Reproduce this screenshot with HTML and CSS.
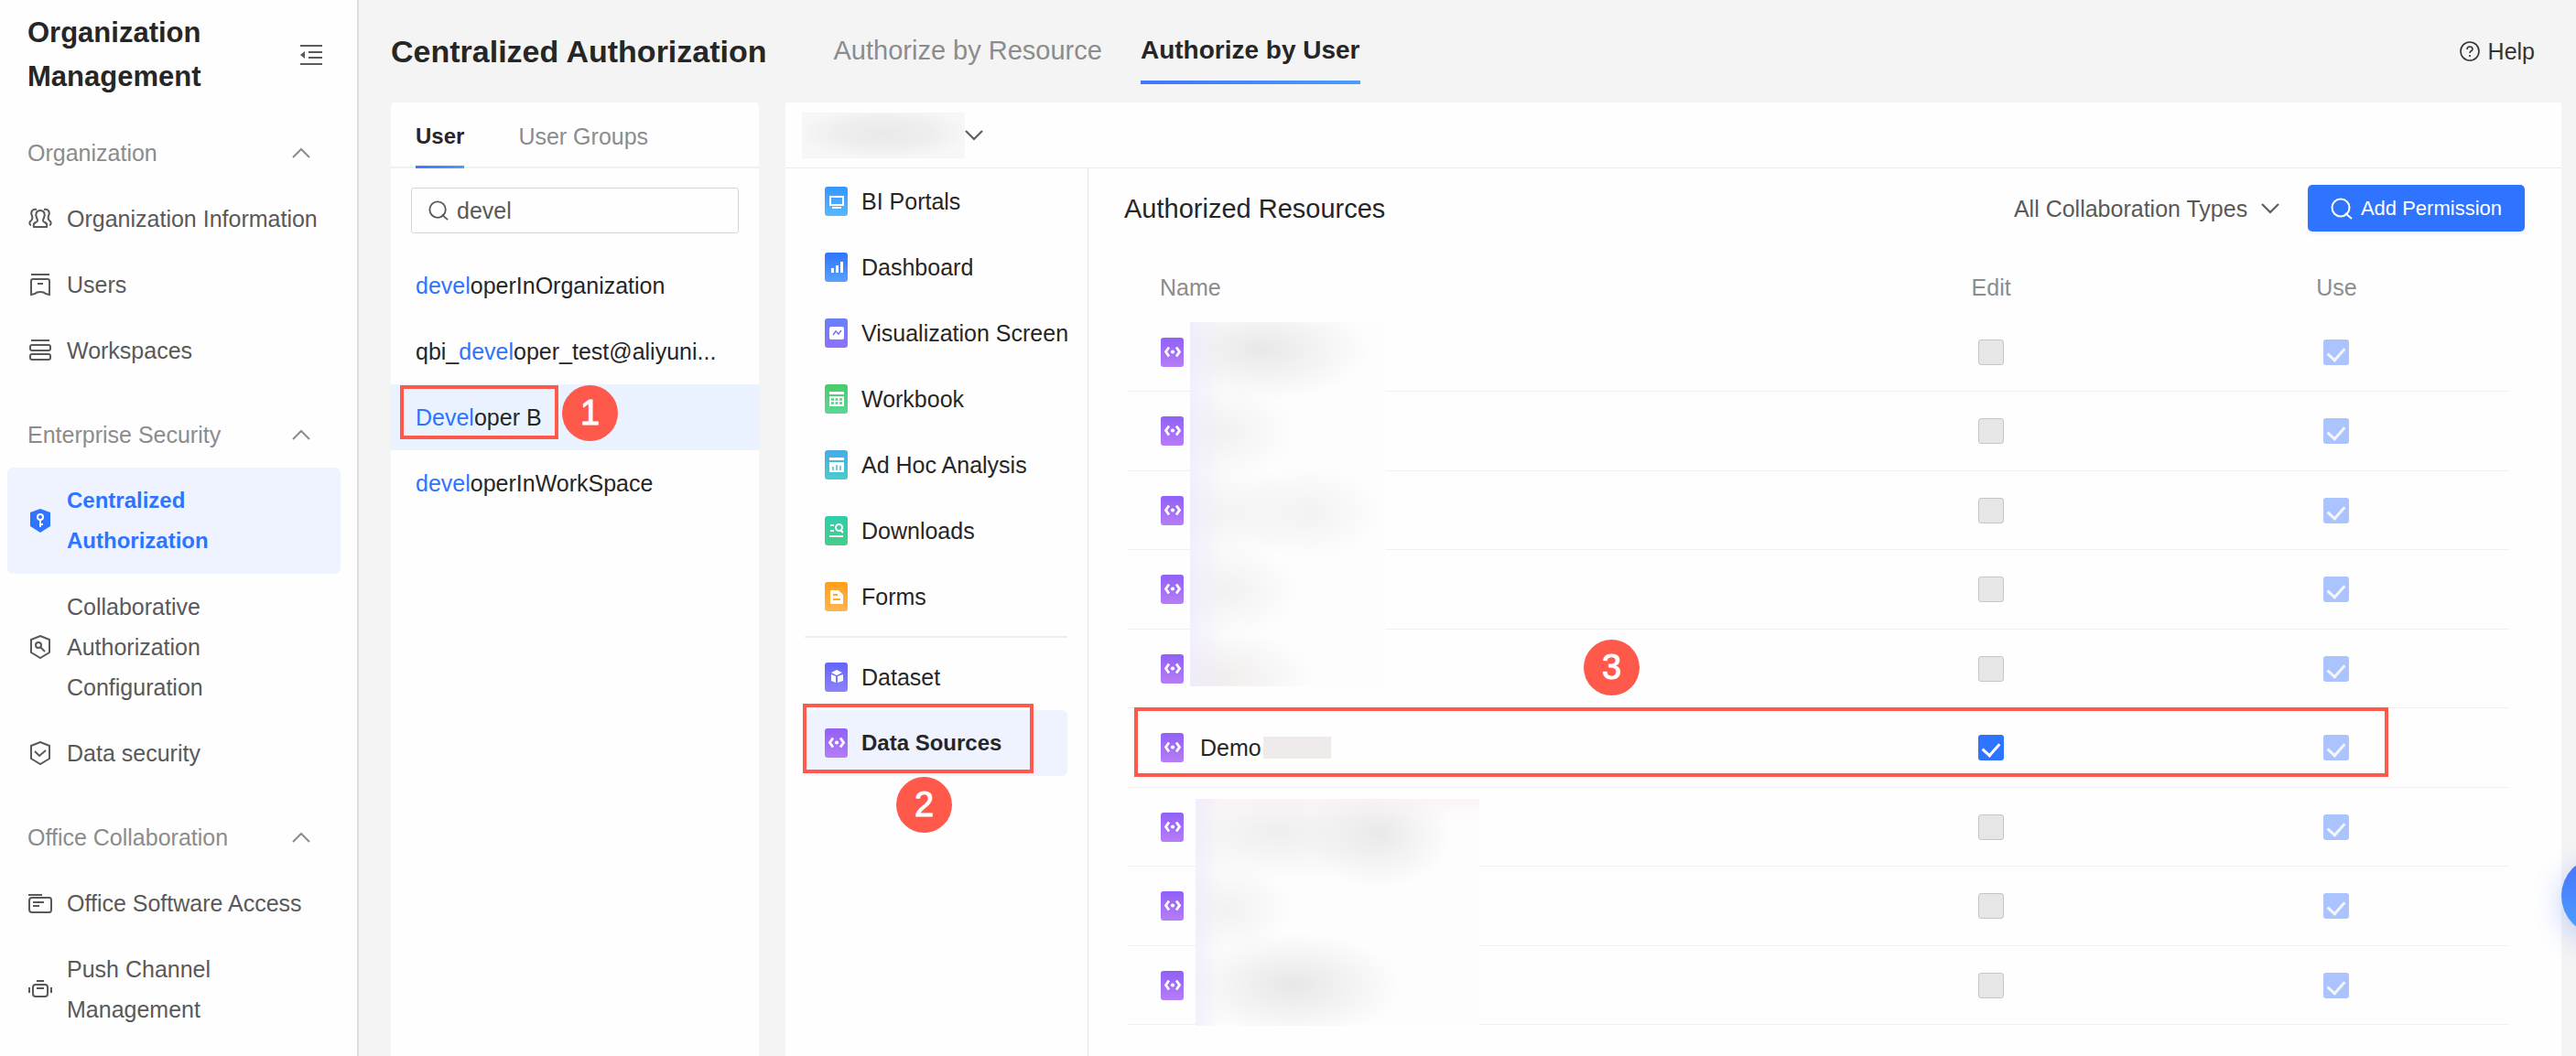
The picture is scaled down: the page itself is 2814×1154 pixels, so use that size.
FILE: index.html
```html
<!DOCTYPE html>
<html lang="en">

<head>
    <meta charset="UTF-8">
    <meta name="viewport" content="width=device-width, initial-scale=1.0">
    <title>Centralized Authorization</title>
    <link rel="stylesheet" href="styles.css">
</head>

<body>

    <!-- shared icons -->
    <svg class="sprite" aria-hidden="true">
        <symbol id="up" viewBox="0 0 20 12">
            <path d="M1 11l9-9 9 9" fill="none" stroke="currentColor" stroke-width="2" />
        </symbol>
        <symbol id="down" viewBox="0 0 20 12">
            <path d="M1 1l9 9 9-9" fill="none" stroke="currentColor" stroke-width="2" />
        </symbol>
        <symbol id="search" viewBox="0 0 24 24">
            <circle cx="11" cy="11" r="9.500" fill="none" stroke="currentColor" stroke-width="2" />
            <path d="M16 17l7 6" fill="none" stroke="currentColor" stroke-width="2" />
        </symbol>
        <symbol id="source" viewBox="0 0 25 32">
            <path d="M9 10.500l-3.500 5 3.500 5M17 10.500l3.500 5-3.500 5" fill="none" stroke="#fff" stroke-width="2.800" />
            <circle cx="13" cy="15.500" r="2.100" fill="#fff" />
        </symbol>
    </svg>

    <div class="layout">
        <aside class="sidebar">
            <div class="side-title">
                <h2>Organization Management</h2>
                <button class="plain" aria-label="Collapse menu">
                    <svg width="24" height="24" viewBox="0 0 24 24" fill="none" stroke="#595959" stroke-width="2">
                        <path d="M0 2h24M9 9h15M9 15h15M0 22h24" />
                        <path d="M0 12l5-4v8z" fill="#595959" stroke="none" />
                    </svg>
                </button>
            </div>

            <nav>
                <button class="group">Organization <svg class="chev"><use href="#up" /></svg></button>
                <a class="item" href="#">
                    <svg class="ico" viewBox="0 0 26 26">
                        <path d="M6 22C5 19 6 18 8 17C11 16 10 14 9 12C7 8 9 4 13 4C17 4 19 8 17 12C16 14 15 16 18 17C20 18 21 19 20 22Z" />
                        <path d="M9 3C4 2 2 6 4 10C5 13 4 14 2 16C1 17 1 20 3 20M17 3C22 2 24 6 22 10C21 13 22 14 24 16C25 17 25 20 23 20" />
                    </svg>
                    <span>Organization Information</span>
                </a>
                <a class="item" href="#">
                    <svg class="ico" viewBox="0 0 26 26">
                        <path d="M3 2h20M5 7h16q2 0 2 2v15l-4-1q-2-2-6-2t-6 2l-4 1V9q0-2 2-2zM10 12h6" />
                    </svg>
                    <span>Users</span>
                </a>
                <a class="item" href="#">
                    <svg class="ico" viewBox="0 0 26 26">
                        <path d="M3 2h20" />
                        <rect x="2" y="7" width="22" height="6" rx="2" />
                        <rect x="2" y="17" width="22" height="6" rx="2" />
                    </svg>
                    <span>Workspaces</span>
                </a>

                <button class="group">Enterprise Security <svg class="chev"><use href="#up" /></svg></button>
                <a class="item active" href="#">
                    <svg class="ico" viewBox="0 0 26 26">
                        <path d="M13 0l11 4v15l-11 7-11-7V4z" fill="#2e74ff" stroke="none" />
                        <circle cx="13" cy="9" r="3" stroke="#fff" />
                        <path d="M13 12v8M13 17h3" stroke="#fff" />
                    </svg>
                    <span>Centralized Authorization</span>
                </a>
                <a class="item" href="#">
                    <svg class="ico" viewBox="0 0 26 26">
                        <path d="M13 1l10 4v14l-10 6-10-6V5z" />
                        <circle cx="11" cy="11" r="3" />
                        <path d="M13 13l5 5" />
                    </svg>
                    <span>Collaborative Authorization Configuration</span>
                </a>
                <a class="item" href="#">
                    <svg class="ico" viewBox="0 0 26 26">
                        <path d="M13 1l10 4v14l-10 6-10-6V5zM7 11l5 5 7-6" />
                    </svg>
                    <span>Data security</span>
                </a>

                <button class="group">Office Collaboration <svg class="chev"><use href="#up" /></svg></button>
                <a class="item" href="#">
                    <svg class="ico" viewBox="0 0 26 26">
                        <path d="M0 4h15M5 12h12M5 16h7" />
                        <path d="M1 10q0-3 3-3h19q2 0 2 3v10q0 3-2 3H4q-3 0-3-3z" />
                    </svg>
                    <span>Office Software Access</span>
                </a>
                <a class="item" href="#">
                    <svg class="ico" viewBox="0 0 26 26">
                        <path d="M9 4h8M1 11v6M25 11v6M9 12h8" />
                        <rect x="5" y="8" width="16" height="13" rx="3" />
                    </svg>
                    <span>Push Channel Management</span>
                </a>
            </nav>
        </aside>

        <main class="main">
            <header class="topbar">
                <h1>Centralized Authorization</h1>
                <a class="toptab" href="#">Authorize by Resource</a>
                <a class="toptab on" href="#">Authorize by User</a>
                <a class="help" href="#">
                    <svg width="22" height="22" viewBox="0 0 22 22" fill="none" stroke="#333" stroke-width="1.600">
                        <circle cx="11" cy="11" r="10" />
                        <path d="M8 9q0-3 3-3t3 3q0 1-2 2-1 1-1 2M11 15v2" />
                    </svg>
                    Help
                </a>
            </header>

            <div class="panels">
                <section class="panel users">
                    <div class="usertabs">
                        <a class="usertab on" href="#">User</a>
                        <a class="usertab" href="#">User Groups</a>
                    </div>
                    <label class="searchbox">
                        <svg width="22" height="22"><use href="#search" /></svg>
                        <input type="text" aria-label="Search users" value="devel">
                    </label>
                    <ul class="userlist">
                        <li><b>devel</b>operInOrganization</li>
                        <li>qbi_<b>devel</b>oper_test@aliyuni...</li>
                        <li class="picked"><b>Devel</b>oper B
                            <span class="frame frame1"></span>
                            <span class="step step1">1</span>
                        </li>
                        <li><b>devel</b>operInWorkSpace</li>
                    </ul>
                </section>

                <section class="panel detail">
                    <div class="who">
                        <button class="plain" aria-label="Selected user">
                            <span class="hidden-name"></span>
                            <svg class="chev"><use href="#down" /></svg>
                        </button>
                    </div>

                    <div class="split">
                        <nav class="types">
                            <a class="type" href="#">
                                <svg class="tile portal" viewBox="0 0 25 32" fill="none" stroke="#fff" stroke-width="2">
                                    <rect x="6" y="11" width="14" height="9" />
                                    <path d="M8 23h10" />
                                </svg>
                                BI Portals
                            </a>
                            <a class="type" href="#">
                                <svg class="tile dash" viewBox="0 0 25 32" fill="none" stroke="#fff" stroke-width="3">
                                    <path d="M8.500 17v5M13.500 14v8M18.500 10v12" />
                                </svg>
                                Dashboard
                            </a>
                            <a class="type" href="#">
                                <svg class="tile screen" viewBox="0 0 25 32">
                                    <rect x="5" y="9" width="16" height="14" rx="2" fill="#fff" />
                                    <path d="M9 18l3-4 3 3 3-4" fill="none" stroke="#7a78fb" stroke-width="1.500" />
                                </svg>
                                Visualization Screen
                            </a>
                            <a class="type" href="#">
                                <svg class="tile book" viewBox="0 0 25 32">
                                    <path d="M5 8h16v3H5zM5 13h16v11H5z" fill="#fff" />
                                    <path d="M7 16.500h12M7 20.500h12" stroke="#52d286" stroke-width="2.500" stroke-dasharray="3 1.500" />
                                </svg>
                                Workbook
                            </a>
                            <a class="type" href="#">
                                <svg class="tile adhoc" viewBox="0 0 25 32">
                                    <path d="M5 8h16v3H5zM5 13h16v10q0 1-1 1H6q-1 0-1-1z" fill="#fff" />
                                    <path d="M9 18v4M13 16v6M17 17v5" stroke="#47bdd8" stroke-width="1.500" />
                                </svg>
                                Ad Hoc Analysis
                            </a>
                            <a class="type" href="#">
                                <svg class="tile down" viewBox="0 0 25 32" fill="none" stroke="#fff" stroke-width="2">
                                    <path d="M6 10h4M6 16h4M5 22h15" />
                                    <circle cx="15.500" cy="12.500" r="3.500" />
                                    <path d="M17 15l3 3" />
                                </svg>
                                Downloads
                            </a>
                            <a class="type" href="#">
                                <svg class="tile form" viewBox="0 0 25 32">
                                    <path d="M6 10q0-1 1-1h8l5 5v9q0 1-1 1H7q-1 0-1-1z" fill="#fff" />
                                    <path d="M9 14h5M9 19h8" stroke="#ffa62e" stroke-width="2" />
                                </svg>
                                Forms
                            </a>
                            <hr>
                            <a class="type" href="#">
                                <svg class="tile set" viewBox="0 0 25 32" fill="#fff">
                                    <path d="M13 8l6 3-6 3-6-3zM7 13l5 2v7l-5-2zM20 13l-6 2v7l6-2z" />
                                </svg>
                                Dataset
                            </a>
                            <a class="type on" href="#">
                                <svg class="tile source"><use href="#source" /></svg>
                                Data Sources
                                <span class="frame frame2"></span>
                                <span class="step step2">2</span>
                            </a>
                        </nav>

                        <div class="resources">
                            <div class="toolbar">
                                <h3>Authorized Resources</h3>
                                <label class="filter">
                                    <select aria-label="Collaboration type">
                                        <option>All Collaboration Types</option>
                                    </select>
                                    <svg class="chev"><use href="#down" /></svg>
                                </label>
                                <button class="add">
                                    <svg width="24" height="24"><use href="#search" /></svg>
                                    Add Permission
                                </button>
                            </div>

                            <table>
                                <thead>
                                    <tr>
                                        <th>Name</th>
                                        <th>Edit</th>
                                        <th>Use</th>
                                    </tr>
                                </thead>
                                <tbody>
                                    <tr>
                                        <td><svg class="tile source"><use href="#source" /></svg><span class="mask mask1"></span></td>
                                        <td><input type="checkbox" aria-label="Edit" disabled></td>
                                        <td><input type="checkbox" aria-label="Use" checked disabled></td>
                                    </tr>
                                    <tr>
                                        <td><svg class="tile source"><use href="#source" /></svg></td>
                                        <td><input type="checkbox" aria-label="Edit" disabled></td>
                                        <td><input type="checkbox" aria-label="Use" checked disabled></td>
                                    </tr>
                                    <tr>
                                        <td><svg class="tile source"><use href="#source" /></svg></td>
                                        <td><input type="checkbox" aria-label="Edit" disabled></td>
                                        <td><input type="checkbox" aria-label="Use" checked disabled></td>
                                    </tr>
                                    <tr>
                                        <td><svg class="tile source"><use href="#source" /></svg></td>
                                        <td><input type="checkbox" aria-label="Edit" disabled></td>
                                        <td><input type="checkbox" aria-label="Use" checked disabled></td>
                                    </tr>
                                    <tr>
                                        <td><svg class="tile source"><use href="#source" /></svg></td>
                                        <td><input type="checkbox" aria-label="Edit" disabled></td>
                                        <td><input type="checkbox" aria-label="Use" checked disabled></td>
                                    </tr>
                                    <tr>
                                        <td>
                                            <div class="name">
                                                <svg class="tile source"><use href="#source" /></svg>
                                                Demo<span class="smudge"></span>
                                            </div>
                                            <span class="frame frame3"></span>
                                            <span class="step step3">3</span>
                                        </td>
                                        <td><input type="checkbox" aria-label="Edit" checked></td>
                                        <td><input type="checkbox" aria-label="Use" checked disabled></td>
                                    </tr>
                                    <tr>
                                        <td><svg class="tile source"><use href="#source" /></svg><span class="mask mask2"></span></td>
                                        <td><input type="checkbox" aria-label="Edit" disabled></td>
                                        <td><input type="checkbox" aria-label="Use" checked disabled></td>
                                    </tr>
                                    <tr>
                                        <td><svg class="tile source"><use href="#source" /></svg></td>
                                        <td><input type="checkbox" aria-label="Edit" disabled></td>
                                        <td><input type="checkbox" aria-label="Use" checked disabled></td>
                                    </tr>
                                    <tr>
                                        <td><svg class="tile source"><use href="#source" /></svg></td>
                                        <td><input type="checkbox" aria-label="Edit" disabled></td>
                                        <td><input type="checkbox" aria-label="Use" checked disabled></td>
                                    </tr>
                                </tbody>
                            </table>
                        </div>
                    </div>
                </section>
            </div>
        </main>
    </div>

    <button class="bubble" aria-label="Assistant"></button>

</body>

</html>
```
FILE: styles.css
```css
* {
    box-sizing: border-box;
}

body {
    margin: 0;
    font-family: "Liberation Sans", Arial, sans-serif;
    font-size: 25px;
    line-height: 44px;
    color: #262626;
    background-color: #f4f4f4;
    overflow: hidden;
}

h1,
h2,
h3,
ul {
    margin: 0;
    padding: 0;
}

a {
    color: inherit;
    text-decoration: none;
}

button,
input,
select {
    font: inherit;
    color: inherit;
    margin: 0;
}

svg {
    display: block;
    flex-shrink: 0;
}

.sprite {
    position: absolute;
    width: 0;
    height: 0;
}

.plain {
    display: flex;
    align-items: center;
    border: none;
    background: none;
    padding: 0;
}

.chev {
    width: 20px;
    height: 12px;
}

.layout {
    display: flex;
    height: 100vh;
}

/* left menu */

.sidebar {
    width: 392px;
    flex-shrink: 0;
    background-color: #fefefe;
    border-right: 2px solid #dcdcdc;
    padding: 0 18px 0 8px;
}

.side-title {
    display: flex;
    align-items: center;
    justify-content: space-between;
    padding: 12px 20px 23px 22px;
}

.side-title h2 {
    width: 240px;
    font-size: 31px;
    line-height: 48px;
}

.group {
    display: flex;
    align-items: center;
    justify-content: space-between;
    width: 100%;
    height: 72px;
    margin-top: 20px;
    padding: 0 33px 0 22px;
    border: none;
    background: none;
    color: #8c8c8c;
}

.group:first-child {
    margin-top: 0;
}

.item {
    display: flex;
    align-items: center;
    gap: 16px;
    padding: 14px 18px 14px 23px;
    border-radius: 6px;
    color: #595959;
}

.item.active {
    background-color: #eff3ff;
    color: #2e74ff;
    font-size: 24px;
    font-weight: bold;
}

.ico {
    width: 26px;
    height: 26px;
    fill: none;
    stroke: #595959;
    stroke-width: 2;
}

/* page header */

.main {
    flex: 1;
    min-width: 0;
    display: flex;
    flex-direction: column;
    padding: 0 16px 0 35px;
}

.topbar {
    display: flex;
    align-items: center;
    height: 112px;
    flex-shrink: 0;
    padding-right: 29px;
}

.topbar h1 {
    font-size: 34px;
    margin-right: 73px;
}

.toptab {
    height: 72px;
    margin-right: 42px;
    padding-top: 13px;
    font-size: 29px;
    color: #8c8c8c;
}

.toptab.on {
    font-size: 28px;
    font-weight: bold;
    color: #262626;
    border-bottom: 4px solid #3f80ff;
    border-image: linear-gradient(to right, #4275ff, #4a9dff) 1;
}

.help {
    display: flex;
    align-items: center;
    gap: 9px;
    margin-left: auto;
    color: #333;
}

.panels {
    display: flex;
    gap: 29px;
    flex: 1;
}

.panel {
    background-color: #fefefe;
    border-radius: 4px 4px 0 0;
}

/* users */

.users {
    width: 402px;
    flex-shrink: 0;
}

.usertabs {
    display: flex;
    gap: 59px;
    height: 72px;
    padding: 0 27px;
    border-bottom: 2px solid #f0f0f0;
}

.usertab {
    height: 72px;
    padding-top: 15px;
    color: #8c8c8c;
}

.usertab.on {
    font-size: 24px;
    font-weight: bold;
    color: #262626;
    border-bottom: 3px solid #3f80ff;
    border-image: linear-gradient(to right, #4275ff, #4a9dff) 1;
}

.searchbox {
    display: flex;
    align-items: center;
    gap: 9px;
    height: 50px;
    margin: 21px 22px;
    padding-left: 18px;
    border: 1px solid #d4d4d4;
    border-radius: 3px;
    color: #595959;
}

.searchbox input {
    width: 100%;
    border: none;
    outline: none;
    padding: 0;
    background: none;
}

.userlist {
    list-style: none;
}

.userlist li {
    position: relative;
    padding: 14px 27px;
    white-space: nowrap;
}

.userlist b {
    font-weight: normal;
    color: #2e74ff;
}

.userlist .picked {
    background-color: #ebf2ff;
}

/* right side */

.detail {
    flex: 1;
    min-width: 0;
    display: flex;
    flex-direction: column;
}

.who {
    display: flex;
    align-items: center;
    height: 72px;
    padding-left: 18px;
    border-bottom: 1px solid #ebebeb;
}

.hidden-name {
    width: 178px;
    height: 50px;
    background: radial-gradient(ellipse at 50% 45%, #e9e9e9, #eeeeee 40%, #f7f7f8 75%);
}

.who .chev {
    color: #595959;
}

.split {
    display: flex;
    flex: 1;
}

.types {
    width: 331px;
    flex-shrink: 0;
    padding: 0 22px 0 21px;
    border-right: 1px solid #e4e4e4;
}

.type {
    position: relative;
    display: flex;
    align-items: center;
    gap: 15px;
    height: 72px;
    padding-left: 22px;
    border-radius: 6px;
    white-space: nowrap;
}

.type.on {
    background-color: #eff3ff;
    font-size: 24px;
    font-weight: bold;
}

.types hr {
    height: 2px;
    margin: 7px 0;
    border: none;
    background-color: #ededed;
}

.tile {
    width: 25px;
    height: 32px;
    border-radius: 3px;
}

.portal { background: linear-gradient(#3397ff, #5bb8ff); }
.dash { background: linear-gradient(#2e74ff, #57a2ff); }
.screen { background: linear-gradient(#6680f8, #9070ff); }
.book { background: linear-gradient(#48cb69, #5bd896); }
.adhoc { background: linear-gradient(#45ade6, #49cbcc); }
.down { background: linear-gradient(#2eceae, #47cd87); }
.form { background: linear-gradient(#ff9f1c, #ffb54e); }
.set { background: linear-gradient(#6365fb, #8c82fc); }
.source { background: linear-gradient(#9160f6, #b57df7); }

.resources {
    flex: 1;
    min-width: 0;
    padding: 18px 40px 0 43px;
}

.toolbar {
    display: flex;
    align-items: center;
    margin-left: -4px;
}

.toolbar h3 {
    font-size: 29px;
    font-weight: normal;
}

.filter {
    display: flex;
    align-items: center;
    gap: 14px;
    margin-left: auto;
    margin-right: 31px;
    color: #595959;
}

.filter select {
    appearance: none;
    border: none;
    outline: none;
    background: none;
    padding: 0;
}

.add {
    display: flex;
    align-items: center;
    gap: 9px;
    height: 51px;
    padding: 0 25px;
    border: none;
    border-radius: 5px;
    background-color: #2e74ff;
    box-shadow: 0 3px 3px #f0f1f6;
    color: #fff;
    font-size: 22px;
    white-space: nowrap;
}

table {
    width: calc(100% - 17px);
    margin-top: 34px;
    table-layout: fixed;
    border-collapse: separate;
    border-spacing: 0;
}

th {
    width: 25%;
    height: 55px;
    padding: 0 0 2px;
    font-weight: normal;
    color: #8c8c8c;
}

th:first-child {
    width: 50%;
    padding-left: 35px;
    text-align: left;
}

tbody tr {
    position: relative;
    height: 86px;
}

tbody tr:nth-child(even) {
    height: 87px;
}

td {
    padding: 0;
    border-bottom: 1px solid #f0f0f0;
    text-align: center;
}

td:first-child {
    padding-left: 36px;
}

.name {
    display: flex;
    align-items: center;
}

.name .tile {
    margin-right: 18px;
}

.smudge {
    width: 74px;
    height: 24px;
    margin-left: 2px;
    background-color: #efebeb;
}

input[type="checkbox"] {
    appearance: none;
    display: grid;
    justify-content: center;
    width: 28px;
    height: 28px;
    margin: 0 auto;
    border-radius: 3px;
    background-color: #2e74ff;
}

input[type="checkbox"]:disabled {
    background-color: #e6e6e6;
    border: 1px solid #c6c6c6;
}

input[type="checkbox"]:checked:disabled {
    background-color: #abc4ff;
    border: none;
}

input[type="checkbox"]:checked::after {
    content: "";
    width: 9px;
    height: 15px;
    margin-top: 5px;
    border: solid #fff;
    border-width: 0 3px 3px 0;
    transform: rotate(42deg);
}

input[type="checkbox"]:checked:disabled::after {
    border-color: #f5f5f5;
}

/* blurred out names */

.mask {
    position: absolute;
    z-index: 1;
}

.mask1 {
    left: 68px;
    top: 10px;
    width: 214px;
    height: 398px;
    background:
        linear-gradient(to right, rgba(236, 230, 252, 0.6), transparent 40px),
        radial-gradient(ellipse 120px 56px at 78px 30px, #e8e8e8, transparent),
        radial-gradient(ellipse 80px 52px at 36px 120px, #f1f1f1, transparent),
        radial-gradient(ellipse 100px 52px at 40px 208px, #f3f3f3, transparent),
        radial-gradient(ellipse 80px 52px at 130px 208px, #f2f2f2, transparent),
        radial-gradient(ellipse 80px 52px at 40px 293px, #f1f1f1, transparent),
        radial-gradient(ellipse 100px 54px at 36px 388px, #f0eeed, transparent),
        #fdfdfd;
}

.mask2 {
    left: 74px;
    top: 12px;
    width: 310px;
    height: 248px;
    background:
        linear-gradient(to right, rgba(236, 230, 252, 0.6), transparent 30px),
        linear-gradient(rgba(250, 240, 240, 0.6), transparent 24px),
        radial-gradient(ellipse 80px 60px at 200px 38px, #e9e9e9, transparent),
        radial-gradient(ellipse 140px 54px at 90px 36px, #eeeeee, transparent),
        radial-gradient(ellipse 70px 50px at 36px 120px, #f1f1f1, transparent),
        radial-gradient(ellipse 120px 58px at 106px 204px, #e7e7e7, transparent),
        #fdfdfd;
}

/* numbered steps */

.frame {
    position: absolute;
    z-index: 2;
    border: 4px solid #ff594c;
}

.frame1 {
    left: 10px;
    top: 1px;
    width: 173px;
    height: 59px;
}

.frame2 {
    left: -2px;
    top: -7px;
    width: 252px;
    height: 76px;
}

.frame3 {
    left: 7px;
    right: 132px;
    top: -1px;
    height: 76px;
}

.step {
    position: absolute;
    z-index: 2;
    width: 61px;
    height: 61px;
    border-radius: 50%;
    background-color: #ff594c;
    color: #fff;
    font-size: 38px;
    font-weight: normal;
    -webkit-text-stroke: 1px #fff;
    line-height: 61px;
    text-align: center;
}

.step1 {
    left: 187px;
    top: 1px;
}

.step2 {
    left: 100px;
    top: 73px;
}

.step3 {
    left: 33%;
    top: -75px;
}

.bubble {
    position: fixed;
    right: -70px;
    bottom: 132px;
    width: 86px;
    height: 86px;
    border: none;
    border-radius: 50%;
    background: linear-gradient(#4a70ff, #4aa2ff);
    box-shadow: 0 8px 32px rgba(60, 110, 255, 0.3);
}
```
